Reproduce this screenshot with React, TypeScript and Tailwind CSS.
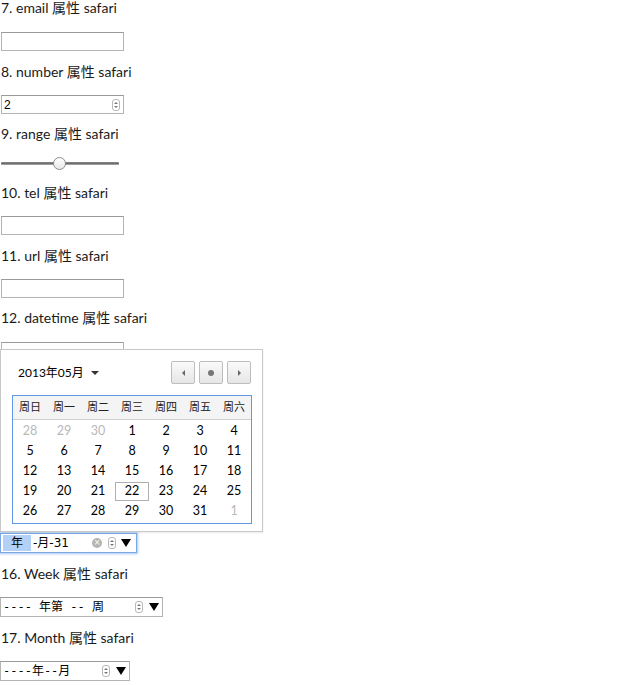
import React from "react";

const label = "block h-4 leading-4 text-[14px] text-[#1a1a1a] whitespace-nowrap";
const box = "block h-[19px] w-[123px] border border-[#b4b4b4] border-t-[#9a9a9a] bg-white";

function Spinner() {
  return (
    <span className="flex h-[12px] w-[8px] flex-col items-center justify-center gap-[2px] rounded-[3px] border border-[#b8b8b8] bg-white">
      <span className="h-0 w-0 border-x-[2px] border-b-[2px] border-x-transparent border-b-[#777]" />
      <span className="h-0 w-0 border-x-[2px] border-t-[2px] border-x-transparent border-t-[#777]" />
    </span>
  );
}

function Drop() {
  return <span className="block h-0 w-0 border-x-[5px] border-t-[8px] border-x-transparent border-t-black" />;
}

const weeks = [
  [28, 29, 30, 1, 2, 3, 4],
  [5, 6, 7, 8, 9, 10, 11],
  [12, 13, 14, 15, 16, 17, 18],
  [19, 20, 21, 22, 23, 24, 25],
  [26, 27, 28, 29, 30, 31, 1],
];

// date picker popup, drawn over the page below the datetime field
function Calendar() {
  return (
    <div className="absolute left-0 top-[349px] z-10 h-[183px] w-[263px] border border-[#c8c8c8] bg-white px-[11px] pt-[11px] shadow-[0_1px_2px_rgba(0,0,0,0.08)]">
      <div className="flex h-[23px] items-center justify-between">
        <div className="flex items-center gap-[7px] pl-[6px] text-[12px] text-black">
          <span>2013年05月</span>
          <span className="block h-0 w-0 border-x-[4px] border-t-[4px] border-x-transparent border-t-[#333]" />
        </div>
        <div className="flex gap-[4px]">
          {["prev", "today", "next"].map((k) => (
            <div
              key={k}
              className="flex h-[23px] w-[24px] items-center justify-center rounded-[2px] border border-[#bdbdbd] bg-gradient-to-b from-[#fafafa] to-[#e6e6e6]"
            >
              {k === "prev" && <span className="block h-0 w-0 border-y-[3px] border-r-[3px] border-y-transparent border-r-[#666]" />}
              {k === "today" && <span className="block h-[6px] w-[6px] rounded-full bg-[#777]" />}
              {k === "next" && <span className="block h-0 w-0 border-y-[3px] border-l-[3px] border-y-transparent border-l-[#666]" />}
            </div>
          ))}
        </div>
      </div>
      <div className="mt-[11px] w-[240px] border border-[#5f99e6]">
        <div className="grid h-[24px] grid-cols-7 items-center border-b border-[#cfcfcf] bg-[#f4f4f4] text-[11px] text-[#222]">
          {["周日", "周一", "周二", "周三", "周四", "周五", "周六"].map((d) => (
            <span key={d} className="text-center">{d}</span>
          ))}
        </div>
        <div className="pb-[2px] pt-[1px]">
          {weeks.map((w, i) => (
            <div key={i} className="grid h-[20px] grid-cols-7 items-center text-[12.5px]">
              {w.map((n, j) => {
                const muted = (i === 0 && j < 3) || (i === 4 && j === 6);
                const today = i === 3 && j === 3;
                return (
                  <span
                    key={j}
                    className={`flex h-[19px] items-center justify-center ${muted ? "text-[#b8b8b8]" : "text-black"} ${
                      today ? "border border-[#b0b0b0]" : ""
                    }`}
                  >
                    {n}
                  </span>
                );
              })}
            </div>
          ))}
        </div>
      </div>
    </div>
  );
}

export default function App() {
  return (
    <div
      className="relative h-[685px] w-[621px] bg-white"
      style={{ fontFamily: '"Lato", "Noto Sans CJK SC", sans-serif' }}
    >
      <div className="flex flex-col">
        <span className={`${label} pl-[1px]`}>7. email 属性 safari</span>
        <span className={`${box} ml-[1px] mt-4`} />

        <span className={`${label} mt-[13px] pl-[1px]`}>8. number 属性 safari</span>
        <div className={`${box} ml-[1px] mt-[15px] flex items-center justify-between pl-[2px] pr-[3px] text-[12px]`} style={{ fontFamily: '"Liberation Sans", sans-serif' }}>
          <span>2</span>
          <Spinner />
        </div>

        <span className={`${label} mt-[12px] pl-[1px]`}>9. range 属性 safari</span>
        <div className="relative ml-[1px] mt-[15px] flex h-[13px] w-[118px] items-center">
          <div className="h-[3px] w-full rounded-[1px] bg-gradient-to-b from-[#8a8a8a] via-[#6e6e6e] to-[#b5b5b5]" />
          <div className="absolute left-[52px] top-0 h-[13px] w-[13px] rounded-full border border-[#8d8d8d] bg-gradient-to-b from-white to-[#e8e8e8]" />
        </div>

        <span className={`${label} mt-[15px] pl-[1px]`}>10. tel 属性 safari</span>
        <span className={`${box} ml-[1px] mt-[15px]`} />

        <span className={`${label} mt-[13px] pl-[1px]`}>11. url 属性 safari</span>
        <span className={`${box} ml-[1px] mt-[15px]`} />

        <span className={`${label} mt-[12px] pl-[1px]`}>12. datetime 属性 safari</span>
        <span className={`${box} ml-[1px] mt-4`} />

        <div
          className="mt-[172px] flex h-[20px] w-[137px] items-center border border-[#7aa7e6] bg-white pl-[2px] pr-[5px] text-[12px] shadow-[0_0_2px_1px_rgba(110,160,230,0.6)]"
          style={{ fontFamily: '"DejaVu Sans", "Noto Sans CJK SC", sans-serif' }}
        >
          <span className="bg-[#b3d1f7] px-[8px] leading-[16px]">年</span>
          <span className="ml-[2px]">-月-31</span>
          <span className="ml-auto mr-[6px] flex h-[10px] w-[10px] items-center justify-center rounded-full bg-[#b5b5b5] text-[8px] leading-none text-white">×</span>
          <Spinner />
          <span className="ml-[5px]"><Drop /></span>
        </div>

        <span className={`${label} mt-[13px] pl-[1px]`}>16. Week 属性 safari</span>
        <div
          className="mt-[15px] flex h-[20px] w-[163px] items-center border border-[#b4b4b4] border-t-[#9a9a9a] bg-white pl-[2px] pr-[3px] text-[12px]"
          style={{ fontFamily: '"DejaVu Sans Mono", "Noto Sans CJK SC", monospace' }}
        >
          <span className="whitespace-pre">---- 年第 -- 周</span>
          <span className="ml-auto"><Spinner /></span>
          <span className="ml-[6px]"><Drop /></span>
        </div>

        <span className={`${label} mt-[13px] pl-[1px]`}>17. Month 属性 safari</span>
        <div
          className="mt-[15px] flex h-[20px] w-[130px] items-center border border-[#b4b4b4] border-t-[#9a9a9a] bg-white pl-[2px] pr-[3px] text-[12px]"
          style={{ fontFamily: '"DejaVu Sans Mono", "Noto Sans CJK SC", monospace' }}
        >
          <span className="whitespace-pre">----年--月</span>
          <span className="ml-auto"><Spinner /></span>
          <span className="ml-[6px]"><Drop /></span>
        </div>
      </div>

      <Calendar />
    </div>
  );
}
